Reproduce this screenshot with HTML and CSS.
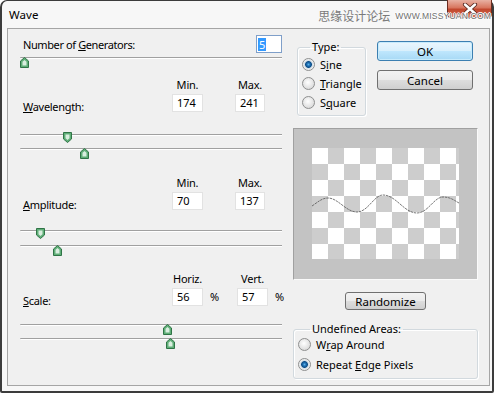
FILE: index.html
```html
<!DOCTYPE html>
<html>
<head>
<meta charset="utf-8">
<title>Wave</title>
<link rel="stylesheet" href="styles.css">
</head>
<body>
<div class="window">
  <div class="titlebar">
    <span class="title">Wave</span>
    <span class="watermark"><span class="wm-cn">思缘设计论坛</span><span class="wm-en">WWW.MISSYUAN.COM</span></span>
    <div class="close">
      <svg width="16" height="12" viewBox="0 0 16 12"><path d="M3 1.5 L13 10.5 M13 1.5 L3 10.5" stroke="#5a2a22" stroke-width="4.2" stroke-linecap="round"/><path d="M3 1.5 L13 10.5 M13 1.5 L3 10.5" stroke="#fff" stroke-width="2.4" stroke-linecap="round"/></svg>
    </div>
  </div>
  <div class="panel">
    <div class="left">
      <div class="gen-row">
        <span class="label">Number of <u>G</u>enerators:</span>
        <span class="numbox"><span class="sel">5</span></span>
      </div>
      <div class="slider">
        <div class="track"></div>
        <svg class="thumb up" style="left:0px" width="9" height="11" viewBox="0 0 9 11"><path d="M4.5 0.5 L8.5 4 V10.5 H0.5 V4 Z" fill="#5fae77" stroke="#2f7446"/><path d="M4.5 3 L6.5 4.8 V8.5 H2.5 V4.8 Z" fill="#d9eedf"/></svg>
      </div>

      <div class="param param-wave">
        <div class="head c1">Min.</div>
        <div class="head c3">Max.</div>
        <div class="plabel"><u>W</u>avelength:</div>
        <div class="box c1">174</div>
        <div class="box c3">241</div>
      </div>
      <div class="slider s-wave">
        <div class="track"></div>
        <svg class="thumb down" style="left:43px" width="9" height="11" viewBox="0 0 9 11"><path d="M0.5 0.5 H8.5 V7 L4.5 10.5 L0.5 7 Z" fill="#5fae77" stroke="#2f7446"/><path d="M2.5 2.5 H6.5 V6.2 L4.5 8 L2.5 6.2 Z" fill="#d9eedf"/></svg>
      </div>
      <div class="slider s-second">
        <div class="track"></div>
        <svg class="thumb up" style="left:60px" width="9" height="11" viewBox="0 0 9 11"><path d="M4.5 0.5 L8.5 4 V10.5 H0.5 V4 Z" fill="#5fae77" stroke="#2f7446"/><path d="M4.5 3 L6.5 4.8 V8.5 H2.5 V4.8 Z" fill="#d9eedf"/></svg>
      </div>

      <div class="param param-amp">
        <div class="head c1">Min.</div>
        <div class="head c3">Max.</div>
        <div class="plabel"><u>A</u>mplitude:</div>
        <div class="box c1">70</div>
        <div class="box c3">137</div>
      </div>
      <div class="slider s-amp">
        <div class="track"></div>
        <svg class="thumb down" style="left:16px" width="9" height="11" viewBox="0 0 9 11"><path d="M0.5 0.5 H8.5 V7 L4.5 10.5 L0.5 7 Z" fill="#5fae77" stroke="#2f7446"/><path d="M2.5 2.5 H6.5 V6.2 L4.5 8 L2.5 6.2 Z" fill="#d9eedf"/></svg>
      </div>
      <div class="slider s-wide">
        <div class="track"></div>
        <svg class="thumb up" style="left:33px" width="9" height="11" viewBox="0 0 9 11"><path d="M4.5 0.5 L8.5 4 V10.5 H0.5 V4 Z" fill="#5fae77" stroke="#2f7446"/><path d="M4.5 3 L6.5 4.8 V8.5 H2.5 V4.8 Z" fill="#d9eedf"/></svg>
      </div>

      <div class="param param-scale">
        <div class="head c1">Horiz.</div>
        <div class="head c3">Vert.</div>
        <div class="plabel"><u>S</u>cale:</div>
        <div class="box c1">56</div>
        <div class="pct c2">%</div>
        <div class="box c3">57</div>
        <div class="pct c4">%</div>
      </div>
      <div class="slider s-scale">
        <div class="track"></div>
        <svg class="thumb up" style="left:143px" width="9" height="11" viewBox="0 0 9 11"><path d="M4.5 0.5 L8.5 4 V10.5 H0.5 V4 Z" fill="#5fae77" stroke="#2f7446"/><path d="M4.5 3 L6.5 4.8 V8.5 H2.5 V4.8 Z" fill="#d9eedf"/></svg>
      </div>
      <div class="slider s-second">
        <div class="track"></div>
        <svg class="thumb up" style="left:146px" width="9" height="11" viewBox="0 0 9 11"><path d="M4.5 0.5 L8.5 4 V10.5 H0.5 V4 Z" fill="#5fae77" stroke="#2f7446"/><path d="M4.5 3 L6.5 4.8 V8.5 H2.5 V4.8 Z" fill="#d9eedf"/></svg>
      </div>
    </div>

    <div class="right">
      <div class="right-top">
        <fieldset class="group type-group">
          <legend>Type:</legend>
          <div class="radio checked"><span class="dot"></span><span>S<u>i</u>ne</span></div>
          <div class="radio"><span class="dot"></span><span><u>T</u>riangle</span></div>
          <div class="radio"><span class="dot"></span><span>S<u>q</u>uare</span></div>
        </fieldset>
        <div class="buttons">
          <div class="btn btn-default">OK</div>
          <div class="btn btn-cancel">Cancel</div>
        </div>
      </div>
      <div class="preview">
        <div class="checker">
          <svg width="147" height="111" viewBox="0 0 147 111"><path d="M0 58 C6 54, 10 50, 16 50 C26 50, 34 64, 45 64 C56 64, 62 47, 71 47 C84 47, 92 65, 105 65 C116 65, 122 49, 131 49 C139 49, 143 53, 147 55" fill="none" stroke="#555" stroke-width="0.8" stroke-dasharray="2.5 0.8"/></svg>
        </div>
      </div>
      <div class="btn btn-random">Randomize</div>
      <fieldset class="group undef-group">
        <legend>Undefined Areas:</legend>
        <div class="radio"><span class="dot"></span><span>W<u>r</u>ap Around</span></div>
        <div class="radio checked"><span class="dot"></span><span>Repeat <u>E</u>dge Pixels</span></div>
      </fieldset>
    </div>
  </div>
</div>
</body>
</html>
```

FILE: styles.css
```css
html, body {
  margin: 0;
  padding: 0;
  background: #ffffff;
}
body {
  font-family: "Noto Sans", "Open Sans", sans-serif;
  font-size: 11px;
  color: #000;
}
u {
  text-decoration: underline;
  text-underline-offset: 1px;
}
.window {
  position: relative;
  width: 494px;
  height: 393px;
  box-sizing: border-box;
  border: 1px solid #3c3c3c;
  border-width: 1px 2px 2px 2px;
  border-radius: 7px 7px 2px 2px;
  background: #f7f7f7;
}
.titlebar {
  height: 27px;
  display: flex;
  align-items: center;
  padding-left: 7px;
  box-sizing: border-box;
}
.title {
  font-size: 11.5px;
  letter-spacing: 0.1px;
  color: #000;
}
.watermark {
  position: relative;
  z-index: 1;
  margin-left: auto;
  display: flex;
  align-items: center;
  padding-top: 1px;
  margin-right: 1px;
}
.wm-cn {
  font-family: "Noto Sans CJK SC", sans-serif;
  font-size: 12px;
  color: #7a7a7a;
}
.wm-en {
  font-family: "Liberation Sans", sans-serif;
  font-size: 8.5px;
  color: #6e6e6e;
  margin-left: 5px;
  letter-spacing: 0.2px;
  padding-top: 2px;
  text-shadow: 1px 0 0 #ffffff, -1px 0 0 #ffffff, 0 1px 0 #ffffff, 0 -1px 0 #ffffff;
}
.close {
  position: absolute;
  top: -1px;
  right: 0;
  width: 45px;
  height: 18px;
  box-sizing: border-box;
  border: 1px solid #6b2c20;
  border-top: none;
  border-radius: 0 0 4px 4px;
  background: linear-gradient(#e8b1a3 0%, #d8765f 45%, #c2472e 55%, #cf6a4c 100%);
  display: flex;
  align-items: center;
  justify-content: center;
}
.panel {
  margin-left: 5px;
  width: 483px;
  height: 358px;
  box-sizing: border-box;
  border: 1px solid #a5a5a5;
  background: #f0f0f0;
  display: flex;
}
.left {
  width: 285px;
  padding-left: 12px;
  box-sizing: border-box;
}
.gen-row {
  width: 262px;
  margin-top: 6px;
  display: flex;
  justify-content: space-between;
  align-items: center;
}
.label {
  padding-left: 3px;
  letter-spacing: -0.4px;
}
.numbox {
  width: 26px;
  height: 18px;
  box-sizing: border-box;
  border: 1px solid #7f9fc9;
  background: #fff;
  display: flex;
  align-items: center;
  padding-left: 1px;
}
.sel {
  background: #3399ff;
  color: #fff;
  line-height: 13px;
  padding: 0 1px;
}
.slider {
  position: relative;
  width: 262px;
  height: 10px;
  margin-top: 4px;
}
.track {
  margin-top: 4px;
  height: 1px;
  background: #a0a0a0;
  border-bottom: 1px solid #ffffff;
  border-radius: 1px 0 0 1px;
}
.thumb {
  position: absolute;
  top: 0;
}
.thumb.down {
  top: -2px;
}
.s-wave {
  margin-top: 22px;
}
.s-amp {
  margin-top: 20px;
}
.s-scale {
  margin-top: 18px;
}
.s-second {
  margin-top: 3px;
}
.s-wide {
  margin-top: 5px;
}
.param {
  display: grid;
  grid-template-columns: 152px 31px 32px 30px;
  grid-template-rows: 14px 18px;
  row-gap: 2px;
  margin-top: 18px;
}
.param-wave {
  margin-top: 11px;
}
.param-scale {
  margin-top: 17px;
  grid-template-columns: 152px 31px 34px 31px 20px;
}
.head {
  grid-row: 1;
  text-align: center;
  line-height: 14px;
  letter-spacing: -0.2px;
}
.c1 { grid-column: 2; }
.c2 { grid-column: 3; }
.c3 { grid-column: 4; }
.c4 { grid-column: 5; }
.plabel {
  grid-row: 2;
  grid-column: 1;
  align-self: end;
  line-height: 14px;
  margin-bottom: -2px;
  padding-left: 3px;
  letter-spacing: -0.3px;
}
.box {
  grid-row: 2;
  height: 18px;
  box-sizing: border-box;
  background: #fff;
  border: 1px solid #e2e2e2;
  padding-left: 4px;
  line-height: 16px;
}
.pct {
  grid-row: 2;
  line-height: 18px;
  padding-left: 7px;
}
.right {
  width: 185px;
  display: flex;
  flex-direction: column;
}
.right-top {
  display: flex;
  margin-top: 11px;
}
.group {
  margin: 0;
  border: 1px solid #d2d9de;
  border-radius: 3px;
  box-shadow: inset 1px 1px 0 #ffffff, 1px 1px 0 #ffffff;
  min-width: 0;
}
.group legend {
  padding: 0 2px;
  line-height: 14px;
}
.type-group {
  margin-left: 4px;
  width: 69px;
  height: 76px;
  box-sizing: border-box;
  padding: 3px 0 0 4px;
}
.type-group legend {
  margin-left: 8px;
}
.radio {
  display: flex;
  align-items: center;
  height: 14px;
  gap: 5px;
  margin-bottom: 5px;
}
.dot {
  width: 11px;
  height: 11px;
  border-radius: 50%;
  border: 1px solid #8e8f8f;
  background: radial-gradient(circle at 45% 40%, #ffffff 0, #e9e9e9 45%, #cfcfcf 100%);
  flex: none;
}
.radio.checked .dot {
  background: radial-gradient(circle at 50% 50%, #5bb2ea 0, #1f6fb2 1.6px, #0d4e88 3px, #d3dde5 3.8px, #f3f3f3 5.5px);
}
.buttons {
  margin-left: 11px;
  margin-top: 1px;
  display: flex;
  flex-direction: column;
}
.btn {
  height: 20px;
  box-sizing: border-box;
  display: flex;
  align-items: center;
  justify-content: center;
  border-radius: 3px;
  border: 1px solid #707070;
  background: linear-gradient(#f2f2f2 0%, #ebebeb 48%, #dddddd 52%, #cfcfcf 100%);
  font-size: 11.5px;
}
.btn-default {
  width: 96px;
  border-color: #3c7fb1;
  background: linear-gradient(#eaf6fd 0%, #d9f0fc 48%, #bee6fd 52%, #a7d9f5 100%);
  box-shadow: inset 0 0 0 1px #c7ebfc;
}
.btn-cancel {
  width: 96px;
  margin-top: 9px;
}
.preview {
  margin-top: 12px;
  height: 152px;
  box-sizing: border-box;
  border: 1px solid;
  border-color: #a0a0a0 #fafafa #fafafa #a0a0a0;
  background: #c3c3c3;
  padding: 19px 17px 20px 18px;
}
.checker {
  width: 147px;
  height: 111px;
  background: repeating-conic-gradient(#cdcdcd 0 25%, #ffffff 0 50%) 0 0 / 32px 32px;
}
.checker svg {
  display: block;
}
.btn-random {
  align-self: center;
  width: 81px;
  height: 18px;
  margin-top: 12px;
}
.undef-group {
  margin-top: 12px;
  width: 185px;
  height: 57px;
  box-sizing: border-box;
  padding: 1px 0 0 4px;
}
.undef-group legend {
  margin-left: 12px;
}
.undef-group .radio {
  margin-bottom: 6px;
}
```
